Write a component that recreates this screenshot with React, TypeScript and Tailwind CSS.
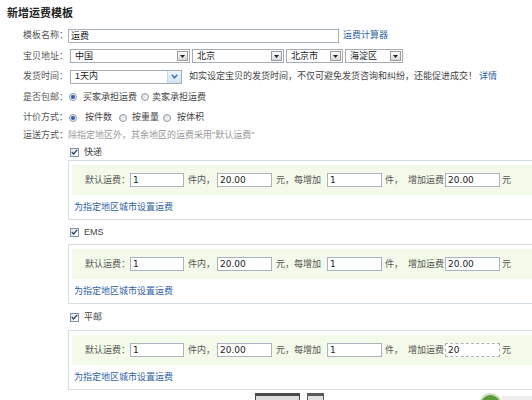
import React from "react";

const LABEL = "w-[68px] shrink-0 text-right text-[#555]";

function Arrow() {
  return (
    <span className="shrink-0 w-[11px] h-[10px] mr-[1px] border border-[#9a9a9a] bg-gradient-to-b from-[#fafafa] to-[#d9d9d9] flex items-center justify-center">
      <svg width="5" height="3" viewBox="0 0 5 3">
        <path d="M0 0 H5 L2.5 3 Z" fill="#222" />
      </svg>
    </span>
  );
}

function Select({ w, value, vista }: { w: string; value: string; vista?: boolean }) {
  return (
    <div className={`h-[14px] border border-[#a5acb2] bg-white flex items-center ${w}`}>
      <span className="flex-1 pl-[4px] text-[#222] leading-none">{value}</span>
      {vista ? (
        <span className="shrink-0 w-[14px] h-[12px] bg-gradient-to-b from-[#eef6fd] to-[#cfe3f6] border-l border-[#c5d8ea] flex items-center justify-center">
          <svg width="7" height="5" viewBox="0 0 7 5">
            <path d="M0.8 0.8 L3.5 3.8 L6.2 0.8" stroke="#3b73b9" strokeWidth="1.5" fill="none" />
          </svg>
        </span>
      ) : (
        <Arrow />
      )}
    </div>
  );
}

function Radio({ on, className = "" }: { on?: boolean; className?: string }) {
  return (
    <span
      className={`shrink-0 w-[8px] h-[8px] rounded-full border border-[#8d99a6] bg-gradient-to-br from-[#d8dde2] to-[#fbfbfb] flex items-center justify-center ${className}`}
    >
      {on && <span className="w-[4px] h-[4px] rounded-full bg-[#2f5ea6]" />}
    </span>
  );
}

function Check() {
  return (
    <span className="shrink-0 w-[9px] h-[9px] border border-[#7f93a8] bg-gradient-to-br from-[#dfe5ea] to-white flex items-center justify-center ml-[2px]">
      <svg width="7" height="6" viewBox="0 0 7 6">
        <path d="M0.8 3 L2.6 5 L6.2 0.8" stroke="#2b3f66" strokeWidth="1.3" fill="none" />
      </svg>
    </span>
  );
}

function Input({ value, w, className = "" }: { value: string; w: string; className?: string }) {
  return (
    <div
      className={`h-[14px] border border-[#a9b4c0] bg-white pl-[2px] flex items-center font-['DejaVu_Sans',sans-serif] text-[9px] text-[#222] leading-none ${w} ${className}`}
    >
      {value}
    </div>
  );
}

function ShipBox({ last }: { last: string }) {
  return (
    <div className="w-[470px] h-[60px] border border-[#d5dde5] pl-[3px] pt-[4px] flex flex-col">
      <div className="h-[30px] bg-[#f3fae9] pl-[13px] flex items-center text-[#555]">
        <span>默认运费：</span>
        <Input value="1" w="w-[54px]" />
        <span className="ml-[4px]">件内，</span>
        <Input value="20.00" w="w-[55px]" className="ml-[2px]" />
        <span className="ml-[4px]">元，每增加</span>
        <Input value="1" w="w-[55px]" className="ml-[6px]" />
        <span className="ml-[3px]">件，</span>
        <span className="ml-[5px]">增加运费</span>
        <Input
          value={last}
          w="w-[55px]"
          className={`ml-[1px] ${last === "20" ? "border-[#8fbde6] border-dashed" : ""}`}
        />
        <span className="ml-[2px]">元</span>
      </div>
      <div className="h-[24px] flex items-center pl-[2px] text-[#2f62a3]">为指定地区城市设置运费</div>
    </div>
  );
}

export default function App() {
  return (
    <div className="w-[532px] h-[400px] overflow-hidden bg-white text-[9px] leading-none text-[#333] font-['Liberation_Sans','Noto_Sans_CJK_SC',sans-serif]">
      <div className="h-[26px] flex items-center pl-[7px] text-[11px] font-bold text-[#222]">新增运费模板</div>

      {/* 模板名称 */}
      <div className="h-[19px] flex items-center">
        <span className={LABEL}>模板名称：</span>
        <Input value="运费" w="w-[271px]" className="font-['Noto_Sans_CJK_SC',sans-serif]" />
        <span className="ml-[4px] text-[#2f62a3]">运费计算器</span>
      </div>

      {/* 宝贝地址 */}
      <div className="h-[22px] flex items-center">
        <span className={LABEL}>宝贝地址：</span>
        <div className="flex items-center gap-[2px] ml-[2px]">
          <Select w="w-[120px]" value="中国" />
          <Select w="w-[92px]" value="北京" />
          <Select w="w-[57px]" value="北京市" />
          <Select w="w-[58px]" value="海淀区" />
        </div>
      </div>

      {/* 发货时间 */}
      <div className="h-[19px] flex items-center">
        <span className={LABEL}>发货时间：</span>
        <div className="ml-[2px]">
          <Select w="w-[112px]" value="1天内" vista />
        </div>
        <span className="ml-[7px] text-[#444]">如实设定宝贝的发货时间，不仅可避免发货咨询和纠纷，还能促进成交！</span>
        <span className="ml-[2px] text-[#2f62a3]">详情</span>
      </div>

      {/* 是否包邮 */}
      <div className="h-[22px] flex items-center">
        <span className={LABEL}>是否包邮：</span>
        <Radio on className="ml-[1px]" />
        <span className="ml-[6px] text-[#444]">买家承担运费</span>
        <Radio className="ml-[4px]" />
        <span className="ml-[3px] text-[#444]">卖家承担运费</span>
      </div>

      {/* 计价方式 */}
      <div className="h-[19px] flex items-center">
        <span className={LABEL}>计价方式：</span>
        <Radio on className="ml-[1px]" />
        <span className="ml-[8px] text-[#444]">按件数</span>
        <Radio className="ml-[7px]" />
        <span className="ml-[5px] text-[#444]">按重量</span>
        <Radio className="ml-[4px]" />
        <span className="ml-[6px] text-[#444]">按体积</span>
      </div>

      {/* 运送方式 */}
      <div className="h-[17px] flex items-center">
        <span className={LABEL}>运送方式：</span>
        <span className="text-[#999]">除指定地区外，其余地区的运费采用"默认运费"</span>
      </div>

      <div className="pl-[68px] flex flex-col">
        <div className="h-[16px] flex items-center">
          <Check />
          <span className="ml-[5px] text-[#444]">快递</span>
        </div>
        <ShipBox last="20.00" />
        <div className="h-[24px] flex items-center">
          <Check />
          <span className="ml-[5px] text-[#444] font-['Liberation_Sans',sans-serif]">EMS</span>
        </div>
        <ShipBox last="20.00" />
        <div className="h-[26px] flex items-center">
          <Check />
          <span className="ml-[5px] text-[#444]">平邮</span>
        </div>
        <ShipBox last="20" />
        <div className="mt-[3px] flex items-start">
          <div className="ml-[187px] w-[45px] h-[22px] border-t-[3px] border-x border-[#4a4a4a] bg-[#dcdcdc]" />
          <div className="ml-[7px] w-[18px] h-[22px] border-t-[3px] border-x border-[#5a5a5a] bg-[#e2e2e2]" />
          <div className="ml-[155px] w-[23px] h-[23px] rounded-full bg-[#5c9b3a] border-2 border-[#cfe3c4]" />
          <div className="w-[30px] h-[22px] bg-[#eeeeee] mt-[3px]" />
        </div>
      </div>
    </div>
  );
}
